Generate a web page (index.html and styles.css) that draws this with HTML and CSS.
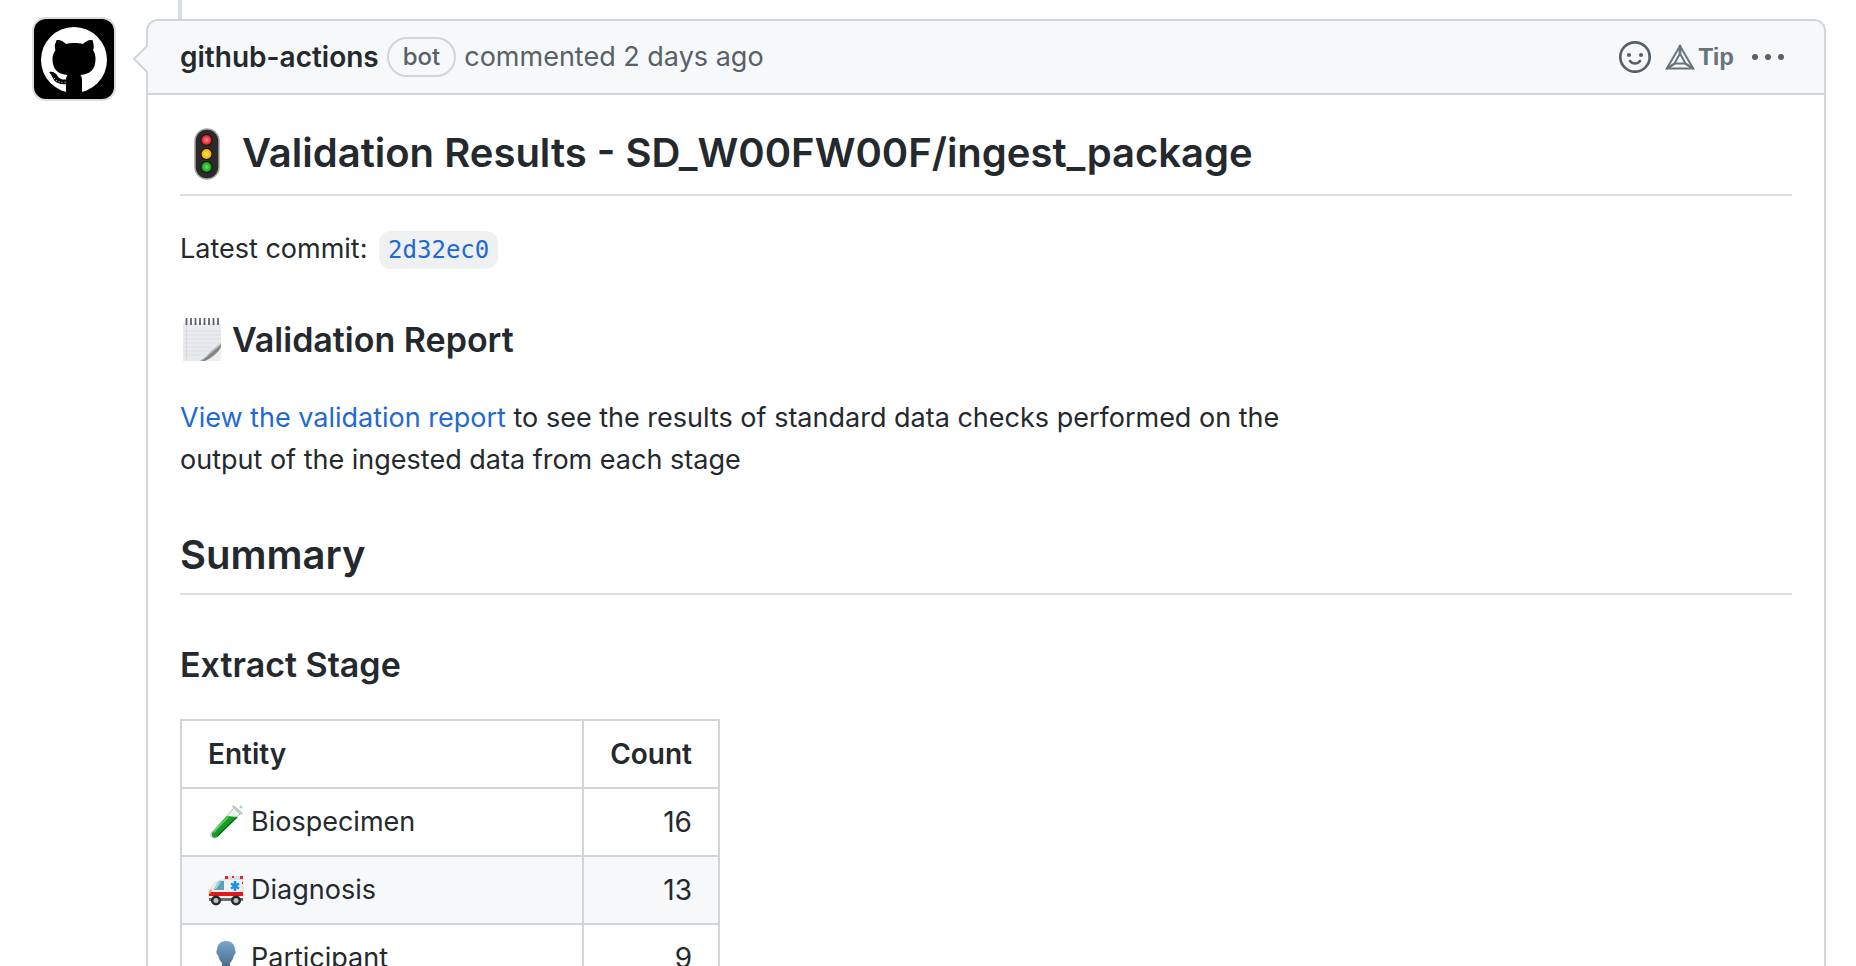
FILE: index.html
```
<!DOCTYPE html>
<html lang="en">
<head>
<meta charset="utf-8">
<title>Validation Results</title>
<link rel="stylesheet" href="styles.css">
</head>
<body>
<main class="timeline-item">
  <a class="avatar" href="#" aria-label="github-actions">
    <svg viewBox="0 0 80 80" aria-hidden="true">
      <rect width="80" height="80" fill="#000"/>
      <circle cx="40" cy="41" r="33" fill="#fff"/>
      <path fill="#000" d="M22 23c0-2 1-2 2-2 3 0 6 2 8 4 5-1.300 12-1.300 17 0 2-2 5-4 8-4 1 0 2 0 2 2 1 3 1 6 0 8 2 3 2.500 6 2.500 9 0 10-5 15-15 16 1.500 2 1.500 4 1.500 6v12l-2 7H34l-2-7V62c0-2 0-4 1.500-6-10-1-15-6-15-16 0-3 1-6 3-9-1-3-1-5 .500-8z"/>
      <path fill="#000" d="M15 53c4-1 7 1 8.500 4 2 3 5 4 9.500 3.500V65c-6 1-11-1-13-4-1.500-3-2.500-5-5-8z"/>
      <path fill="none" stroke="#fff" stroke-width="1" stroke-dasharray="1 2" d="M20 59c3 4 7 4.500 12 4"/>
    </svg>
  </a>
  <article class="comment">
    <header class="comment-header">
      <svg class="caret" viewBox="0 0 16 28" aria-hidden="true"><path d="M16 0L2 14l14 14" fill="#f6f8fa" stroke="#d1d5da" stroke-width="2"/></svg>
      <div class="byline">
        <a class="author" href="#">github-actions</a>
        <span class="label">bot</span>
        <span>commented 2 days ago</span>
      </div>
      <div class="actions">
        <button class="action" type="button" aria-label="Add reaction">
          <svg width="32" height="32" viewBox="0 0 32 32" aria-hidden="true"><circle cx="16" cy="16" r="14.700" fill="none" stroke="#586069" stroke-width="2.700"/><circle cx="10" cy="14" r="2.100" fill="#586069"/><circle cx="22" cy="14" r="2.100" fill="#586069"/><path d="M11 20c2.500 3.300 7.500 3.300 10 0" fill="none" stroke="#586069" stroke-width="2.700" stroke-linecap="round"/></svg>
        </button>
        <button class="action tip" type="button">
          <svg width="30" height="26" viewBox="0 0 30 26" aria-hidden="true"><g fill="none" stroke="#6a737d" stroke-width="2"><path d="M15 2L1.800 24.500h26.400z"/><path d="M15 9.500L9.500 19.500h11z"/><path d="M15 1v9M1.800 24.500l8-5M28.200 24.500l-8-5" stroke-width="2.600"/></g></svg>
          <span>Tip</span>
        </button>
        <button class="action more" type="button" aria-label="Show options">
          <svg width="32" height="8" viewBox="0 0 32 8" aria-hidden="true"><g fill="#586069"><circle cx="3" cy="4" r="3"/><circle cx="16" cy="4" r="3"/><circle cx="29" cy="4" r="3"/></g></svg>
        </button>
      </div>
    </header>
    <div class="comment-body">
      <h2 class="title">
        <svg width="54" height="55" viewBox="0 0 54 55" aria-hidden="true">
          <defs>
            <radialGradient id="red"><stop offset="0" stop-color="#ff8c90"/><stop offset="1" stop-color="#dd1420"/></radialGradient>
            <radialGradient id="amber"><stop offset="0" stop-color="#fff05a"/><stop offset="1" stop-color="#f5a700"/></radialGradient>
            <radialGradient id="green"><stop offset="0" stop-color="#6ee56a"/><stop offset="1" stop-color="#0b9a18"/></radialGradient>
          </defs>
          <rect x="15" y="2" width="24" height="50" rx="12" fill="#2c2a28" stroke="#a5a5a3" stroke-width="1.500"/>
          <circle cx="26.500" cy="13" r="6" fill="#151515"/><circle cx="26.500" cy="27" r="6" fill="#151515"/><circle cx="26.500" cy="40" r="6" fill="#151515"/>
          <circle cx="26.500" cy="13" r="5" fill="url(#red)"/>
          <circle cx="26.500" cy="27" r="5" fill="url(#amber)"/>
          <circle cx="26.500" cy="40" r="5" fill="url(#green)"/>
        </svg>
        <span>Validation Results - SD_W00FW00F/ingest_package</span>
      </h2>
      <p>Latest commit: <a class="commit" href="#"><code>2d32ec0</code></a></p>
      <h3 class="subtitle">
        <svg width="44" height="47" viewBox="0 0 44 47" aria-hidden="true">
          <defs>
            <linearGradient id="paper" x1="0" y1="0" x2="0" y2="1"><stop offset="0" stop-color="#e9ecef"/><stop offset="1" stop-color="#e6eaed"/></linearGradient>
            <linearGradient id="curl" x1="0" y1="0" x2="1" y2="1"><stop offset="0.250" stop-color="#fff"/><stop offset="0.500" stop-color="#e4e4e4"/><stop offset="0.620" stop-color="#77797b"/><stop offset="0.850" stop-color="#d8d9da"/></linearGradient>
          </defs>
          <path d="M3 5h38v38H3z" fill="url(#paper)"/>
          <path d="M3 13h38M3 17h38M3 21h38M3 25h36M3 29h30M3 33h28M3 37h24" stroke="#d3dbe3" stroke-width="0.700"/>
          <path d="M6.500 5v38" stroke="#efc8cc" stroke-width="0.700"/>
          <path d="M41 27v16H22z" fill="#eeeff0"/>
          <path d="M41 24c-3 4-8 3-10 7-2 5-6 10-13 12h7c7-3 13-8 16-14z" fill="url(#curl)"/>
          <path d="M6.500 0v7M11 0v7M15.500 0v7M20 0v7M24.500 0v7M29 0v7M33.500 0v7M38 0v7" stroke="#5f6265" stroke-width="1.800"/>
        </svg>
        <span>Validation Report</span>
      </h3>
      <p class="report"><a href="#">View the validation report</a> to see the results of standard data checks performed on the output of the ingested data from each stage</p>
      <h2>Summary</h2>
      <h3>Extract Stage</h3>
      <table>
        <thead><tr><th>Entity</th><th class="count">Count</th></tr></thead>
        <tbody>
          <tr>
            <td><div class="name">
              <svg width="36" height="36" viewBox="0 0 36 36" aria-hidden="true">
                <path d="M26 4l6 6L9 33c-5 3-8-1-5-5z" fill="#e9f2ea" stroke="#b0c0b3" stroke-width="1"/>
                <path d="M19 12l10 1L8.500 33c-3 2-6-1-4-4.500z" fill="#159c25"/>
                <path d="M20 13L6 28" stroke="#5bd560" stroke-width="1.500" stroke-linecap="round"/>
                <path d="M29 13L9 32.500" stroke="#0a6a18" stroke-width="1.500"/>
                <path d="M25.500 2.500l8 7" stroke="#c3cac6" stroke-width="2.500" stroke-linecap="round"/>
                <circle cx="33" cy="3" r="1.500" fill="#9be0a0"/>
              </svg><span>Biospecimen</span></div></td>
            <td class="count">16</td>
          </tr>
          <tr>
            <td><div class="name">
              <svg width="36" height="36" viewBox="0 0 36 36" aria-hidden="true">
                <path d="M17 5h18v23H1v-9l6-8c2-2 5-3 10-3z" fill="#f0f1f2" stroke="#c4c8cb" stroke-width="0.600"/>
                <path d="M9 11c2-2 5-2 7-2v9H6z" fill="#5b9fb4"/><path d="M9 11l4-1-5 7H5z" fill="#a9d8e3"/>
                <path d="M1 20h34v4H1z" fill="#e3181d"/>
                <path d="M17 4h18v4H17z" fill="#dfe0e1"/><path d="M17 4h3v3h-3zM32 4h3v3h-3zM24 4h2v2h-2zM34 10h1v2h-1z" fill="#d92a2c"/>
                <path d="M27 9v10M23 11.500l8 5M31 11.500l-8 5" stroke="#1793e6" stroke-width="2.600"/>
                <path d="M1 26h34v3H1z" fill="#6a6d71"/><path d="M1 20l2-3 1 1-2 4H1z" fill="#f4a21d"/>
                <circle cx="8" cy="28.500" r="5" fill="#28292b"/><circle cx="8" cy="28.500" r="2.500" fill="#bfc2c4"/>
                <circle cx="28" cy="28.500" r="5" fill="#28292b"/><circle cx="28" cy="28.500" r="2.500" fill="#bfc2c4"/>
              </svg><span>Diagnosis</span></div></td>
            <td class="count">13</td>
          </tr>
          <tr>
            <td><div class="name">
              <svg width="36" height="36" viewBox="0 0 36 36" aria-hidden="true">
                <defs><linearGradient id="bust" x1="0" y1="0" x2="0" y2="1"><stop offset="0" stop-color="#7ba6c9"/><stop offset="1" stop-color="#38597b"/></linearGradient></defs>
                <path d="M18 1c6 0 9 4 9 9 1 1 1 4-1 5-1 4-2 6-4 8v4c5 3 12 2 13 8H1c1-6 8-5 13-8v-4c-2-2-3-4-4-8-2-1-2-4-1-5 0-5 3-9 9-9z" fill="url(#bust)"/>
              </svg><span>Participant</span></div></td>
            <td class="count">9</td>
          </tr>
        </tbody>
      </table>
    </div>
  </article>
</main>
</body>
</html>
```
FILE: styles.css
```
* {
  box-sizing: border-box;
}

html {
  overflow: hidden;
}

body {
  margin: 0;
  background: #fff;
  color: #24292e;
  font-family: Inter, "Liberation Sans", sans-serif;
  font-size: 27px;
  line-height: 42px;
}

a {
  color: #2169d6;
  text-decoration: none;
}

.timeline-item {
  position: relative;
  display: flex;
  align-items: flex-start;
  gap: 32px;
  height: 100vh;
  padding: 19px 30px 0 34px;
}

.timeline-item::before {
  content: "";
  position: absolute;
  top: 0;
  left: 178px;
  width: 4px;
  height: 19px;
  background: #dadfe4;
}

.avatar {
  flex: none;
  width: 80px;
  height: 80px;
  border-radius: 12px;
  box-shadow: 0 0 0 2px #dcdcdc;
  overflow: hidden;
}

.avatar svg {
  display: block;
}

.comment {
  flex: 1;
  min-width: 0;
  border: 2px solid #d1d5da;
  border-radius: 12px;
}

.comment-header {
  position: relative;
  display: flex;
  align-items: center;
  justify-content: space-between;
  padding: 15px 40px 15px 32px;
  border-bottom: 2px solid #d1d5da;
  border-radius: 10px 10px 0 0;
  background: #f6f8fa;
  color: #586069;
}

.caret {
  position: absolute;
  top: 24px;
  left: -16px;
  width: 16px;
  height: 28px;
}

.byline {
  display: flex;
  align-items: center;
  gap: 8px;
}

.author {
  color: #24292e;
  font-size: 28px;
  font-weight: 600;
}

.label {
  padding: 0 14px;
  border: 2px solid #d1d5da;
  border-radius: 20px;
  font-size: 24px;
  font-weight: 500;
  line-height: 36px;
}

.actions {
  display: flex;
  align-items: center;
  gap: 14px;
}

.action {
  display: flex;
  align-items: center;
  gap: 3px;
  padding: 0;
  border: 0;
  background: none;
  color: #6a737d;
}

.tip {
  font: bold 24px/32px "Liberation Sans", Arial, sans-serif;
}

.more {
  padding-left: 4px;
}

.comment-body {
  padding: 32px;
}

h2,
h3 {
  margin: 48px 0 32px;
  font-weight: 600;
}

h2 {
  padding-bottom: 12px;
  border-bottom: 2px solid #dadfe4;
  font-size: 40px;
  line-height: 52px;
}

h3 {
  font-size: 34px;
  line-height: 44px;
}

p {
  margin: 0 0 32px;
}

.title,
.subtitle {
  display: flex;
  align-items: flex-start;
  gap: 8px;
}

.title {
  margin-top: 0;
}

.report {
  max-width: 1120px;
}

.commit {
  margin-left: 4px;
}

code {
  padding: 5px 9px;
  border-radius: 12px;
  background: #eff0f2;
  font-family: "DejaVu Sans Mono", monospace;
  font-size: 24px;
  line-height: 28px;
}

table {
  width: 540px;
  border-collapse: collapse;
}

th,
td {
  padding: 12px 26px;
  border: 2px solid #d1d5da;
  text-align: left;
}

th {
  font-size: 28px;
  font-weight: 600;
}

.count {
  width: 134px;
  font-size: 28px;
  text-align: right;
}

tbody tr:nth-child(2n) {
  background: #f6f8fa;
}

.name {
  display: flex;
  align-items: center;
  gap: 7px;
}
```
